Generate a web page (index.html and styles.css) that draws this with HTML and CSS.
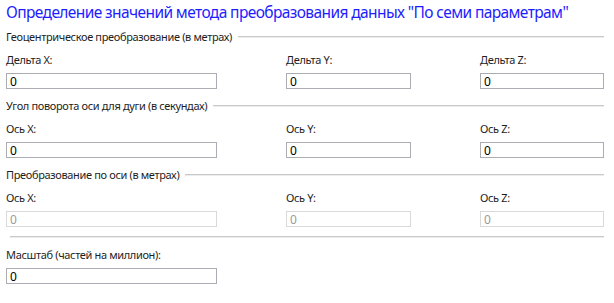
FILE: index.html
```html
<!DOCTYPE html>
<html lang="ru">
<head>
    <meta charset="UTF-8">
    <title>Семь параметров</title>
    <link rel="stylesheet" href="styles.css">
</head>
<body>
    <div class="page">
        <h1 class="title">Определение значений метода преобразования данных "По семи параметрам"</h1>

        <div class="section-head"><span>Геоцентрическое преобразование (в метрах)</span></div>
        <div class="row">
            <div class="field">
                <label>Дельта X:</label>
                <input type="text" value="0">
            </div>
            <div class="field">
                <label>Дельта Y:</label>
                <input type="text" value="0">
            </div>
            <div class="field">
                <label>Дельта Z:</label>
                <input type="text" value="0">
            </div>
        </div>

        <div class="section-head"><span>Угол поворота оси для дуги (в секундах)</span></div>
        <div class="row">
            <div class="field">
                <label>Ось X:</label>
                <input type="text" value="0">
            </div>
            <div class="field">
                <label>Ось Y:</label>
                <input type="text" value="0">
            </div>
            <div class="field">
                <label>Ось Z:</label>
                <input type="text" value="0">
            </div>
        </div>

        <div class="section-head"><span>Преобразование по оси (в метрах)</span></div>
        <div class="row">
            <div class="field">
                <label>Ось X:</label>
                <input type="text" value="0" disabled>
            </div>
            <div class="field">
                <label>Ось Y:</label>
                <input type="text" value="0" disabled>
            </div>
            <div class="field">
                <label>Ось Z:</label>
                <input type="text" value="0" disabled>
            </div>
        </div>

        <div class="separator"></div>
        <div class="row row-scale">
            <div class="field">
                <label>Масштаб (частей на миллион):</label>
                <input type="text" value="0">
            </div>
        </div>
    </div>
</body>
</html>
```

FILE: styles.css
```css
body {
    margin: 0;
    background-color: #fff;
    color: #1e1e1e;
    font-family: "Noto Sans", "Open Sans", sans-serif;
    font-size: 11px;
    letter-spacing: -0.35px;
}
.page {
    padding: 0 10px 0 6px;
}
.title {
    margin: 0;
    font-size: 15.5px;
    letter-spacing: -0.6px;
    font-weight: normal;
    line-height: 24px;
    color: #1d1dff;
    white-space: nowrap;
}
.section-head {
    display: flex;
    align-items: center;
    height: 16px;
    line-height: 16px;
    margin-top: 5px;
}
.section-head::after {
    content: "";
    flex: 1;
    margin-left: 6px;
    border-top: 1px solid #c9c9c9;
    border-bottom: 1px solid #ececec;
}
.row {
    display: grid;
    grid-template-columns: 211px 125px 124px;
    column-gap: 69px;
    margin-top: 7px;
    margin-bottom: 9px;
}
.row-scale {
    margin-top: 9px;
}
.field label {
    display: block;
    height: 16px;
    line-height: 16px;
    margin-bottom: 5px;
}
.field input {
    display: block;
    box-sizing: border-box;
    width: 100%;
    height: 16px;
    margin: 0;
    padding: 0 3px;
    border: 1px solid #abadb3;
    border-radius: 0;
    font-family: inherit;
    font-size: 12px;
    letter-spacing: 0;
    color: #000;
    background: #fff;
}
.field input:disabled {
    border-color: #d9d9d9;
    color: #9a9a9a;
}
.separator {
    margin: 9px 0 0 4px;
    border-top: 1px solid #c9c9c9;
    border-bottom: 1px solid #ececec;
}
```
